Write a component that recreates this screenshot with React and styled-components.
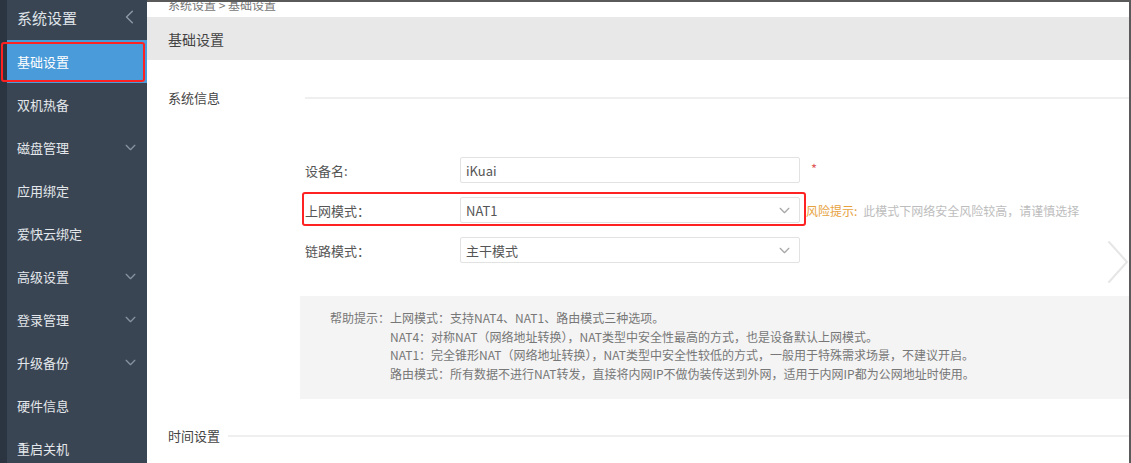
import React from 'react';
import styled, { createGlobalStyle } from 'styled-components';

const GlobalStyle = createGlobalStyle`
  html, body { margin: 0; padding: 0; background: #fff; }
  body {
    font-family: "Noto Sans CJK SC", "Noto Sans", "Liberation Sans", sans-serif;
    overflow: hidden;
  }
`;

const menu = [
  { label: '基础设置', active: true },
  { label: '双机热备' },
  { label: '磁盘管理', sub: true },
  { label: '应用绑定' },
  { label: '爱快云绑定' },
  { label: '高级设置', sub: true },
  { label: '登录管理', sub: true },
  { label: '升级备份', sub: true },
  { label: '硬件信息' },
  { label: '重启关机' },
];

const helpLines = [
  'NAT4：对称NAT（网络地址转换），NAT类型中安全性最高的方式，也是设备默认上网模式。',
  'NAT1：完全锥形NAT（网络地址转换），NAT类型中安全性较低的方式，一般用于特殊需求场景，不建议开启。',
  '路由模式：所有数据不进行NAT转发，直接将内网IP不做伪装传送到外网，适用于内网IP都为公网地址时使用。',
];

function Chevron({ dir = 'down', size = 12, color = '#8793a1' }) {
  const d = dir === 'down' ? 'M2 4 L6 8 L10 4' : dir === 'left' ? 'M8 1 L3 6 L8 11' : 'M4 1 L9 6 L4 11';
  return (
    <svg width={size} height={size} viewBox="0 0 12 12" fill="none">
      <path d={d} stroke={color} strokeWidth="1.2" strokeLinecap="round" strokeLinejoin="round" />
    </svg>
  );
}

function App() {
  return (
    <Page>
      <GlobalStyle />
      <Sidebar>
        <Strip />
        <Menu>
          <MenuHead>
            <span>系统设置</span>
            <Chevron dir="left" size={14} color="#8d99a6" />
          </MenuHead>
          {menu.map((m) => (
            <MenuItem key={m.label} $active={m.active}>
              <span>{m.label}</span>
              {m.sub && <Chevron size={13} />}
              {m.active && <Mark />}
            </MenuItem>
          ))}
        </Menu>
      </Sidebar>

      <Main>
        <Crumb>系统设置 &gt; 基础设置</Crumb>
        <TitleBar>基础设置</TitleBar>

        <SectionHead $top={28} $lineStart={137}>
          <span>系统信息</span>
          <Rule />
        </SectionHead>

        <Form>
          <Row>
            <Label>设备名:</Label>
            <Field>iKuai</Field>
            <Required>*</Required>
          </Row>
          <Row>
            <Label>上网模式：</Label>
            <Field>
              NAT1
              <Chevron size={13} color="#a8a8a8" />
            </Field>
            <Tip>
              <TipTitle>风险提示:</TipTitle>此模式下网络安全风险较高，请谨慎选择
            </Tip>
            <RowMark />
          </Row>
          <Row>
            <Label>链路模式：</Label>
            <Field>
              主干模式
              <Chevron size={13} color="#a8a8a8" />
            </Field>
          </Row>
        </Form>

        <Help>
          <HelpLine $first>帮助提示：上网模式：支持NAT4、NAT1、路由模式三种选项。</HelpLine>
          {helpLines.map((l) => (
            <HelpLine key={l}>{l}</HelpLine>
          ))}
        </Help>

        <SectionHead $top={27} $lineStart={60}>
          <span>时间设置</span>
          <Rule />
        </SectionHead>

        <SideArrow>
          <svg width="22" height="44" viewBox="0 0 22 44" fill="none">
            <path d="M2 2 L20 22 L2 42" stroke="#e6e6e6" strokeWidth="2" strokeLinecap="round" />
          </svg>
        </SideArrow>
      </Main>
    </Page>
  );
}

const Page = styled.div`
  display: flex;
  width: 1131px;
  height: 463px;
  overflow: hidden;
`;

const Sidebar = styled.aside`
  width: 147px;
  flex-shrink: 0;
  display: flex;
  background: #3a4553;
`;

const Strip = styled.div`
  width: 7px;
  background: #2a3541;
`;

const Menu = styled.nav`
  flex: 1;
  display: flex;
  flex-direction: column;
`;

const MenuHead = styled.div`
  flex-shrink: 0;
  height: 40px;
  box-sizing: border-box;
  padding: 0 10px 6px 10px;
  display: flex;
  align-items: center;
  justify-content: space-between;
  color: #dfe3e8;
  font-size: 15px;
`;

const MenuItem = styled.div`
  position: relative;
  flex-shrink: 0;
  height: 43px;
  padding: 0 10px;
  display: flex;
  align-items: center;
  justify-content: space-between;
  font-size: 13px;
  color: ${(p) => (p.$active ? '#ffffff' : '#e3e7eb')};
  background: ${(p) => (p.$active ? '#4a9bd9' : 'transparent')};
`;

const Mark = styled.div`
  position: absolute;
  left: -6px;
  top: 2px;
  width: 140px;
  height: 36px;
  border: 2px solid #ff2222;
  border-radius: 3px;
`;

const Main = styled.main`
  position: relative;
  flex: 1;
  display: flex;
  flex-direction: column;
  border-top: 2px solid #5a5a5a;
  border-right: 2px solid #5a5a5a;
  overflow: hidden;
`;

const Crumb = styled.div`
  flex-shrink: 0;
  height: 20px;
  margin-top: -5px;
  padding-left: 21px;
  font-size: 12px;
  line-height: 16px;
  color: #777;
`;

const TitleBar = styled.div`
  flex-shrink: 0;
  height: 43px;
  padding-left: 21px;
  display: flex;
  align-items: center;
  background: #e8e8e8;
  color: #444;
  font-size: 14px;
`;

const SectionHead = styled.div`
  flex-shrink: 0;
  margin-top: ${(p) => p.$top}px;
  padding-left: 21px;
  display: flex;
  align-items: center;
  font-size: 13px;
  color: #444;
  span {
    width: ${(p) => p.$lineStart}px;
    flex-shrink: 0;
  }
`;

const Rule = styled.div`
  flex: 1;
  height: 2px;
  background: #efefef;
`;

const Form = styled.div`
  flex-shrink: 0;
  margin-top: 50px;
  padding-left: 158px;
  display: flex;
  flex-direction: column;
  gap: 14px;
`;

const Row = styled.div`
  position: relative;
  height: 26px;
  display: flex;
  align-items: center;
`;

const Label = styled.div`
  width: 155px;
  font-size: 13px;
  color: #555;
`;

const Field = styled.div`
  width: 340px;
  height: 26px;
  box-sizing: border-box;
  padding: 0 8px 0 5px;
  display: flex;
  align-items: center;
  justify-content: space-between;
  border: 1px solid #e2e2e2;
  border-radius: 2px;
  font-size: 13px;
  color: #555;
`;

const Required = styled.span`
  margin-left: 11px;
  margin-top: -4px;
  color: #e05a5a;
  font-size: 13px;
`;

const Tip = styled.div`
  margin-left: 6px;
  font-size: 12px;
  color: #bdbdbd;
  white-space: nowrap;
`;

const TipTitle = styled.span`
  color: #e7a23e;
  margin-right: 6px;
`;

const RowMark = styled.div`
  position: absolute;
  left: -3px;
  top: -5px;
  width: 500px;
  height: 30px;
  border: 2px solid #ff2222;
  border-radius: 3px;
  pointer-events: none;
`;

const Help = styled.div`
  flex-shrink: 0;
  margin-top: 33px;
  margin-left: 153px;
  height: 103px;
  box-sizing: border-box;
  padding: 13px 0 0 30px;
  background: #f4f4f4;
`;

const HelpLine = styled.div`
  padding-left: ${(p) => (p.$first ? 0 : 60)}px;
  font-size: 12px;
  line-height: 18.7px;
  color: #777;
  white-space: nowrap;
`;

const SideArrow = styled.div`
  position: absolute;
  right: 0;
  top: 238px;
`;

export default App;
